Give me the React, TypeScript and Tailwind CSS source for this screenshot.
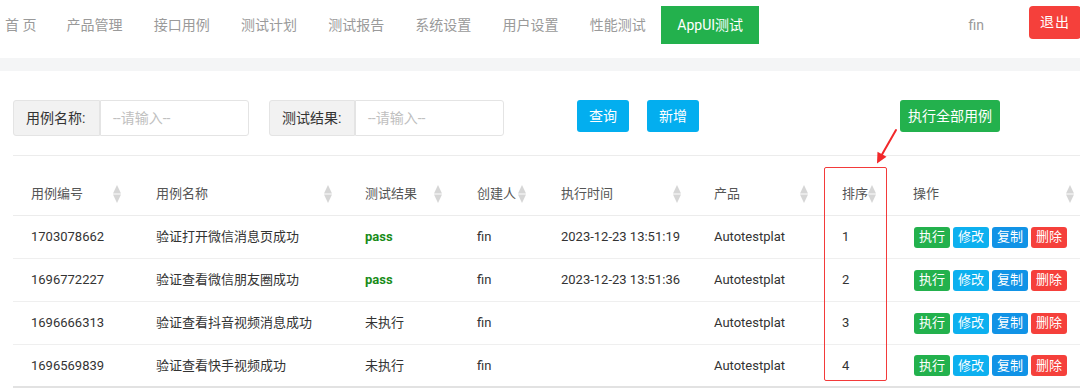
import React from "react";

const navItems = ["产品管理", "接口用例", "测试计划", "测试报告", "系统设置", "用户设置", "性能测试"];

const headers: { label: string; pr: string }[] = [
  { label: "用例编号", pr: "pr-[18px] pl-[18px]" },
  { label: "用例名称", pr: "pr-[16px] pl-[17px]" },
  { label: "测试结果", pr: "pr-[18px] pl-[17px]" },
  { label: "创建人", pr: "pr-[18px] pl-[17px]" },
  { label: "执行时间", pr: "pr-[16px] pl-[17px]" },
  { label: "产品", pr: "pr-[17px] pl-[17px]" },
  { label: "排序", pr: "pr-[20px] pl-[17px]" },
  { label: "操作", pr: "pr-[6px] pl-[17px]" },
];

const rows = [
  ["1703078662", "验证打开微信消息页成功", "pass", "fin", "2023-12-23 13:51:19", "Autotestplat", "1"],
  ["1696772227", "验证查看微信朋友圈成功", "pass", "fin", "2023-12-23 13:51:36", "Autotestplat", "2"],
  ["1696666313", "验证查看抖音视频消息成功", "未执行", "fin", "", "Autotestplat", "3"],
  ["1696569839", "验证查看快手视频成功", "未执行", "fin", "", "Autotestplat", "4"],
];

function SortIcon() {
  return (
    <svg width="8" height="20" viewBox="0 0 8 20" className="shrink-0">
      <polygon points="4,1 8,9.5 0,9.5" fill="#d6d6d6" />
      <polygon points="0,10.5 8,10.5 4,19" fill="#d6d6d6" />
    </svg>
  );
}

const grid = "grid grid-cols-[126px_209px_112px_84px_153px_128px_71px_1fr]";

export default function App() {
  return (
    <div className="relative w-[1080px] h-[392px] overflow-hidden bg-white font-[Roboto,'Noto_Sans_CJK_SC',sans-serif]">
      {/* top nav */}
      <div className="h-[58px] flex items-start pt-[6px]">
        <div className="flex items-center h-[38px] text-[14px] text-[#9a9a9a]">
          <div className="w-[51px] pl-[5px] whitespace-pre">首 页</div>
          {navItems.map((n) => (
            <div key={n} className="px-[15.6px]">{n}</div>
          ))}
          <div className="h-[38px] px-4 flex items-center bg-[#23b14d] text-white">AppUI测试</div>
        </div>
        <div className="ml-auto flex items-start">
          <div className="h-[38px] flex items-center text-[14px] text-[#9a9a9a] mr-[45px]">fin</div>
          <div className="h-[33px] w-[52px] flex items-center justify-center rounded-[4px] bg-[#f5403b] text-white text-[14px] tracking-[1px] mr-[-1px]">退出</div>
        </div>
      </div>
      <div className="h-[13px] bg-[#f4f5f6]" />

      {/* search row */}
      <div className="pl-[13px]">
        <div className="flex items-start mt-[29px] h-[36px]">
          <div className="flex">
            <div className="w-[87px] h-[36px] flex items-center pl-[12px] bg-[#f2f2f2] border border-[#e4e4e4] rounded-l-[3px] text-[14px] text-[#333]">用例名称:</div>
            <div className="w-[149px] h-[36px] flex items-center pl-[12px] border border-[#e4e4e4] rounded-r-[3px] text-[14px] text-[#c0c0c0]">--请输入--</div>
          </div>
          <div className="flex ml-[20px]">
            <div className="w-[86px] h-[36px] flex items-center pl-[12px] bg-[#f2f2f2] border border-[#e4e4e4] rounded-l-[3px] text-[14px] text-[#333]">测试结果:</div>
            <div className="w-[149px] h-[36px] flex items-center pl-[12px] border border-[#e4e4e4] rounded-r-[3px] text-[14px] text-[#c0c0c0]">--请输入--</div>
          </div>
          <div className="ml-[73px] w-[52px] h-[32px] flex items-center justify-center rounded-[3px] bg-[#03aeef] text-white text-[14px]">查询</div>
          <div className="ml-[18px] w-[52px] h-[32px] flex items-center justify-center rounded-[3px] bg-[#03aeef] text-white text-[14px]">新增</div>
          <div className="ml-[201px] w-[100px] h-[32px] flex items-center justify-center rounded-[3px] bg-[#23b14d] text-white text-[14px]">执行全部用例</div>
        </div>
        <div className="mt-[19px] h-px bg-[#ececec]" />

        {/* table */}
        <div className="mt-[16px] text-[13px]">
          <div className={`${grid} h-[44px] border-b border-[#ececec]`}>
            {headers.map((h) => (
              <div key={h.label} className={`flex items-center justify-between ${h.pr} text-[#555]`}>
                <span>{h.label}</span>
                <SortIcon />
              </div>
            ))}
          </div>
          {rows.map((r, i) => (
            <div
              key={r[0]}
              className={`${grid} h-[43px] ${i === rows.length - 1 ? "border-b-2 border-[#e2e2e2]" : "border-b border-[#efefef]"} text-[#333]`}
            >
              <div className="flex items-center pl-[18px]">{r[0]}</div>
              <div className="flex items-center pl-[17px]">{r[1]}</div>
              <div className="flex items-center pl-[17px]">
                {r[2] === "pass" ? <span className="font-bold text-[#198c19]">pass</span> : r[2]}
              </div>
              <div className="flex items-center pl-[17px]">{r[3]}</div>
              <div className="flex items-center pl-[17px]">{r[4]}</div>
              <div className="flex items-center pl-[17px]">{r[5]}</div>
              <div className="flex items-center pl-[17px]">{r[6]}</div>
              <div className="flex items-center pl-[18px] gap-[3px]">
                <div className="w-[36px] h-[21px] flex items-center justify-center rounded-[3px] bg-[#23b14d] text-white">执行</div>
                <div className="w-[36px] h-[21px] flex items-center justify-center rounded-[3px] bg-[#0db0ef] text-white">修改</div>
                <div className="w-[36px] h-[21px] flex items-center justify-center rounded-[3px] bg-[#1193e6] text-white">复制</div>
                <div className="w-[36px] h-[21px] flex items-center justify-center rounded-[3px] bg-[#f5403b] text-white">删除</div>
              </div>
            </div>
          ))}
        </div>
      </div>

      {/* annotation */}
      <div className="absolute left-[824px] top-[167px] w-[63px] h-[214px] border-[1.5px] border-[#f33a3a] rounded-[2px]" />
      <svg className="absolute left-[865px] top-[125px]" width="40" height="45" viewBox="0 0 40 45">
        <line x1="31" y1="5" x2="17" y2="29.5" stroke="#f2282a" strokeWidth="2" strokeLinecap="round" />
        <polygon points="21.5,31.8 12.5,26.8 12,38.5" fill="#f2282a" />
      </svg>
    </div>
  );
}
